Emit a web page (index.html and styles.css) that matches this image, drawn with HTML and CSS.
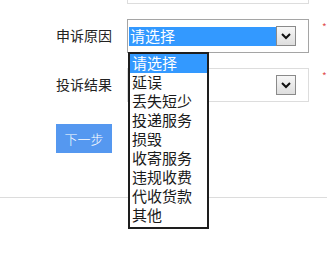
FILE: index.html
```html
<!DOCTYPE html>
<html lang="zh-CN">
<head>
<meta charset="utf-8">
<title>申诉</title>
<link rel="stylesheet" href="styles.css">
</head>
<body>
<div class="page">
  <div class="form">
    <div class="row">
      <span class="label"></span>
      <div class="select light"><span class="value"></span><span class="arrow"><svg width="10" height="7" viewBox="0 0 10 7"><path d="M1 1 L5 5 L9 1" fill="none" stroke="#111" stroke-width="2"/></svg></span></div>
      <span class="req"></span>
    </div>
    <div class="row">
      <span class="label">申诉原因</span>
      <div class="select focused"><span class="value selected">请选择</span><span class="arrow"><svg width="10" height="7" viewBox="0 0 10 7"><path d="M1 1 L5 5 L9 1" fill="none" stroke="#111" stroke-width="2"/></svg></span></div>
      <span class="req">*</span>
    </div>
    <div class="row">
      <span class="label">投诉结果</span>
      <div class="select light"><span class="value"></span><span class="arrow"><svg width="10" height="7" viewBox="0 0 10 7"><path d="M1 1 L5 5 L9 1" fill="none" stroke="#111" stroke-width="2"/></svg></span></div>
      <span class="req">*</span>
    </div>
    <div class="actions">
      <button class="btn" type="button">下一步</button>
    </div>
  </div>
  <div class="divider"></div>
  <ul class="dropdown">
    <li class="active">请选择</li>
    <li>延误</li>
    <li>丢失短少</li>
    <li>投递服务</li>
    <li>损毁</li>
    <li>收寄服务</li>
    <li>违规收费</li>
    <li>代收货款</li>
    <li>其他</li>
  </ul>
</div>
</body>
</html>
```
FILE: styles.css
```css
html, body {
  margin: 0;
  padding: 0;
  background: #fff;
  overflow: hidden;
}
body {
  font-family: "Noto Sans CJK SC", "Noto Sans", sans-serif;
  color: #222;
}
.page {
  position: relative;
  width: 327px;
  height: 258px;
  overflow: hidden;
}
.form {
  margin-top: -30px;
  padding-left: 56px;
  display: flex;
  flex-direction: column;
  gap: 15px;
}
.row {
  display: flex;
  align-items: center;
  height: 34px;
}
.label {
  width: 71px;
  font-size: 14px;
  line-height: 18px;
  color: #222;
  margin-top: -2px;
}
.select {
  box-sizing: border-box;
  width: 182px;
  height: 34px;
  border: 1px solid #ddd;
  padding: 0 12px 0 1px;
  display: flex;
  align-items: center;
  background: #fff;
}
.select.focused {
  border-color: #a5a5a5;
}
.value {
  flex: 1;
  height: 19px;
  font-size: 15px;
  line-height: 18px;
  padding-left: 1px;
}
.value.selected {
  background: #3399ff;
  color: #fff;
}
.arrow {
  box-sizing: border-box;
  width: 20px;
  height: 20px;
  border: 1px solid #8a8a8a;
  background: linear-gradient(#f7f7f7, #dedede);
  display: flex;
  align-items: center;
  justify-content: center;
}
.req {
  margin-left: 13px;
  margin-top: -20px;
  color: #e05050;
  font-size: 10px;
}
.actions {
  padding-top: 7px;
}
.btn {
  width: 56px;
  height: 29px;
  border: 0;
  padding: 0;
  background: #5598f0;
  color: #fff;
  font-family: "Noto Sans CJK SC", sans-serif;
  font-size: 13px;
  font-weight: 300;
}
.divider {
  margin-top: 44px;
  height: 1px;
  background: #dcdcdc;
}
.dropdown {
  position: absolute;
  left: 128px;
  top: 52px;
  box-sizing: border-box;
  width: 81px;
  height: 177px;
  margin: 0;
  padding: 0;
  list-style: none;
  border: 2px solid #1e1e1e;
  background: #fff;
}
.dropdown li {
  height: 19px;
  font-size: 15px;
  line-height: 18px;
  padding-left: 2px;
  color: #1a1a1a;
  white-space: nowrap;
}
.dropdown li.active {
  background: #3399ff;
  color: #fff;
}
```
